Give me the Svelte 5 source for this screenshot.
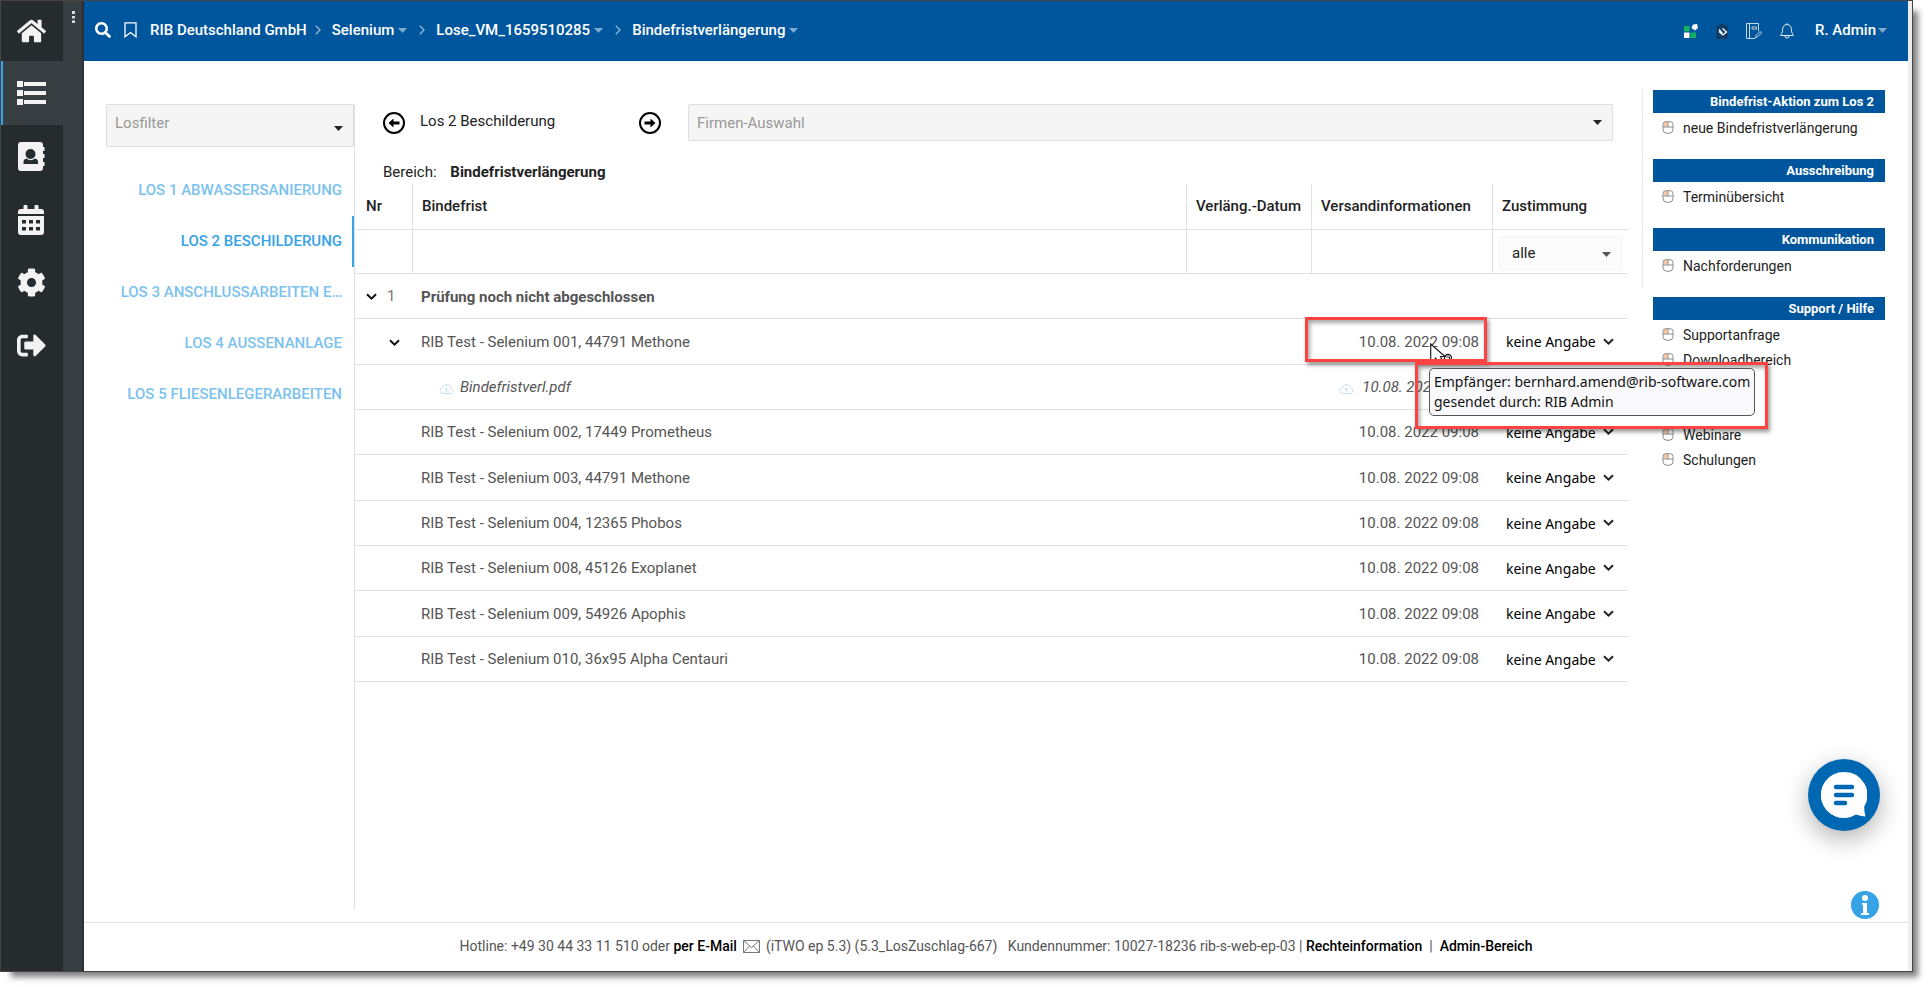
<script lang="ts">
    const crumbs = [
        { label: 'RIB Deutschland GmbH', menu: false },
        { label: 'Selenium', menu: true },
        { label: 'Lose_VM_1659510285', menu: true },
        { label: 'Bindefristverlängerung', menu: true }
    ];

    const lose = [
        'Los 1 Abwassersanierung',
        'Los 2 Beschilderung',
        'Los 3 Anschlussarbeiten E…',
        'Los 4 Aussenanlage',
        'Los 5 Fliesenlegerarbeiten'
    ];
    let activeLos = $state(1);

    const sentAt = '10.08. 2022 09:08';
    const firms = [
        { name: 'RIB Test - Selenium 001, 44791 Methone', file: 'Bindefristverl.pdf' },
        { name: 'RIB Test - Selenium 002, 17449 Prometheus' },
        { name: 'RIB Test - Selenium 003, 44791 Methone' },
        { name: 'RIB Test - Selenium 004, 12365 Phobos' },
        { name: 'RIB Test - Selenium 008, 45126 Exoplanet' },
        { name: 'RIB Test - Selenium 009, 54926 Apophis' },
        { name: 'RIB Test - Selenium 010, 36x95 Alpha Centauri' }
    ];

    const actions = [
        { title: 'Bindefrist-Aktion zum Los 2', links: ['neue Bindefristverlängerung'] },
        { title: 'Ausschreibung', links: ['Terminübersicht'] },
        { title: 'Kommunikation', links: ['Nachforderungen'] }
    ];
    const support = {
        title: 'Support / Hilfe',
        links: ['Supportanfrage', 'Downloadbereich', '', '', 'Webinare', 'Schulungen']
    };
</script>

{#snippet caret()}
    <svg class="caret" width="9" height="5" viewBox="0 0 9 5"><path d="M0 0h9L4.500 5z" fill="currentColor" /></svg>
{/snippet}

{#snippet chevron()}
    <svg class="chevron" width="11" height="8" viewBox="0 0 11 8"><path d="M1 1.200l4.500 4.500L10 1.200" fill="none" stroke="currentColor" stroke-width="2" /></svg>
{/snippet}

{#snippet cloud()}
    <svg class="cloud" width="15" height="12" viewBox="0 0 15 12" fill="none" stroke="currentColor">
        <path d="M3.500 10.500h8a2.700 2.700 0 0 0 .7-5.200A4.600 4.600 0 0 0 3.400 4.600a3 3 0 0 0 .1 5.900z" />
        <path d="M7.500 9V5M5.500 6.800l2-2 2 2" />
    </svg>
{/snippet}

{#snippet section(s)}
    <section class="box">
        <h2>{s.title}</h2>
        <ul>
            {#each s.links as link}
                <li>
                    <a href="#top">
                        <svg width="12" height="13" viewBox="0 0 12 13">
                            <path d="M1.500 5.500V3a2 2 0 0 1 2-2H5.500v4.500z" fill="#f9c79c" />
                            <path d="M1 3.500Q1 .7 3.800.7h4.400Q11 .7 11 3.500v4.800q0 4-4 4H5q-4 0-4-4zM1 6h10M6 .7V6" fill="none" stroke="#8c8c8c" />
                        </svg>
                        <span>{link}</span>
                    </a>
                </li>
            {/each}
        </ul>
    </section>
{/snippet}

<div class="window" id="top">
    <nav class="sidebar">
        <a href="#home" aria-label="Start">
            <svg width="29" height="26" viewBox="0 0 576 512"><path d="M280.370 148.260L96 300.110V464a16 16 0 0 0 16 16l112.060-.29a16 16 0 0 0 15.920-16V368a16 16 0 0 1 16-16h64a16 16 0 0 1 16 16v95.640a16 16 0 0 0 16 16.050L464 480a16 16 0 0 0 16-16V300L295.670 148.260a12.190 12.190 0 0 0-15.300 0zM571.600 251.470L488 182.560V44.050a12 12 0 0 0-12-12h-56a12 12 0 0 0-12 12v72.610L318.470 43a48 48 0 0 0-61 0L4.340 251.470a12 12 0 0 0-1.600 16.900l25.500 31A12 12 0 0 0 45.150 301l235.220-193.740a12.190 12.190 0 0 1 15.300 0L530.900 301a12 12 0 0 0 16.900-1.600l25.500-31a12 12 0 0 0-1.700-16.930z" /></svg>
        </a>
        <a href="#list" class="active" aria-label="Liste">
            <svg width="29" height="26" viewBox="0 0 29 26"><path d="M0 1h6v6H0zM7 2h22v4H7zM0 10h6v6H0zM7 11h22v4H7zM0 19h6v6H0zM7 20h22v4H7z" /></svg>
        </a>
        <a href="#contacts" aria-label="Adressbuch">
            <svg width="27" height="29" viewBox="0 0 27 29">
                <path fill-rule="evenodd" d="M3 0h19a3 3 0 0 1 3 3v2h1.500v4H25v3h1.500v4H25v4h1.500v4H25v2a3 3 0 0 1-3 3H3a3 3 0 0 1-3-3V3a3 3 0 0 1 3-3zM12.500 7a5 5 0 1 0 0 10 5 5 0 0 0 0-10zM8.500 16.500q-3 .5-3 3.500v2h14.500v-2q0-3-3-3.500-2 1.800-4.300 1.800t-4.200-1.800z" />
            </svg>
        </a>
        <a href="#calendar" aria-label="Kalender">
            <svg width="26" height="30" viewBox="0 0 26 30">
                <path d="M0 9V7a3 3 0 0 1 3-3h2.500V1a1 1 0 0 1 1-1h2a1 1 0 0 1 1 1v3h7V1a1 1 0 0 1 1-1h2a1 1 0 0 1 1 1v3H23a3 3 0 0 1 3 3v2z" />
                <path fill-rule="evenodd" d="M0 11h26v16a3 3 0 0 1-3 3H3a3 3 0 0 1-3-3zM4 15v3.500h4V15zM11 15v3.500h4V15zM18 15v3.500h4V15zM4 22v3.500h4V22zM11 22v3.500h4V22zM18 22v3.500h4V22z" />
            </svg>
        </a>
        <a href="#settings" aria-label="Einstellungen">
            <svg width="29" height="29" viewBox="0 0 512 512"><path d="M487.400 315.700l-42.600-24.600c4.300-23.200 4.300-47 0-70.200l42.600-24.600c4.900-2.800 7.100-8.600 5.500-14-11.100-35.600-30-67.800-54.700-94.600-3.800-4.100-10-5.100-14.800-2.300L380.800 110c-17.900-15.400-38.500-27.300-60.800-35.100V25.800c0-5.600-3.900-10.500-9.400-11.700-36.700-8.200-74.300-7.800-109.200 0-5.500 1.200-9.400 6.100-9.400 11.700V75c-22.200 7.900-42.800 19.800-60.800 35.100L88.700 85.500c-4.900-2.800-11-1.900-14.800 2.300-24.700 26.700-43.600 58.900-54.700 94.600-1.700 5.400.6 11.200 5.500 14L67.300 221c-4.300 23.200-4.300 47 0 70.200l-42.600 24.600c-4.900 2.800-7.100 8.600-5.500 14 11.100 35.600 30 67.800 54.700 94.600 3.800 4.100 10 5.100 14.800 2.300l42.600-24.600c17.900 15.400 38.500 27.300 60.800 35.100v49.200c0 5.600 3.900 10.500 9.400 11.700 36.700 8.200 74.300 7.800 109.200 0 5.500-1.200 9.400-6.100 9.400-11.700v-49.200c22.200-7.900 42.800-19.800 60.800-35.100l42.600 24.600c4.900 2.800 11 1.900 14.800-2.300 24.700-26.700 43.600-58.900 54.700-94.600 1.500-5.500-.7-11.300-5.600-14.100zM256 336c-44.100 0-80-35.900-80-80s35.900-80 80-80 80 35.900 80 80-35.900 80-80 80z" /></svg>
        </a>
        <a href="#logout" aria-label="Abmelden">
            <svg width="29" height="29" viewBox="0 0 512 512"><path d="M497 273L329 441c-15 15-41 4.500-41-17v-96H152c-13.300 0-24-10.700-24-24v-96c0-13.300 10.700-24 24-24h136V88c0-21.400 25.900-32 41-17l168 168c9.300 9.400 9.300 24.600 0 34zM192 436v-40c0-6.600-5.400-12-12-12H96c-17.700 0-32-14.300-32-32V160c0-17.700 14.300-32 32-32h84c6.600 0 12-5.400 12-12V76c0-6.600-5.400-12-12-12H96c-53 0-96 43-96 96v192c0 53 43 96 96 96h84c6.600 0 12-5.400 12-12z" /></svg>
        </a>
    </nav>
    <div class="strip">
        <button aria-label="Menü">
            <svg width="3" height="12" viewBox="0 0 3 12" fill="#ddd"><path d="M0 0h3v3H0zM0 5h3v2.500H0zM0 9.500h3V12H0z" /></svg>
        </button>
    </div>

    <div class="page">
        <header class="topbar">
            <button aria-label="Suche">
                <svg width="16" height="16" viewBox="0 0 512 512" fill="#fff"><path d="M505 442.700L405.300 343c-4.500-4.500-10.600-7-17-7H372c27.600-35.300 44-79.700 44-128C416 93.100 322.900 0 208 0S0 93.100 0 208s93.100 208 208 208c48.300 0 92.700-16.400 128-44v16.300c0 6.400 2.500 12.500 7 17l99.700 99.700c9.400 9.400 24.600 9.400 33.900 0l28.300-28.300c9.400-9.400 9.400-24.600.1-34zM208 336c-70.700 0-128-57.200-128-128 0-70.700 57.200-128 128-128 70.700 0 128 57.200 128 128 0 70.700-57.200 128-128 128z" /></svg>
            </button>
            <button class="bookmark" aria-label="Lesezeichen">
                <svg width="13" height="16" viewBox="0 0 13 16"><path d="M1 .8h11v14l-5.500-4.200L1 14.800z" fill="none" stroke="#fff" stroke-width="1.300" /></svg>
            </button>
            <div class="crumbs">
                {#each crumbs as c, i}
                    {#if i > 0}
                        <svg class="sep" width="6" height="10" viewBox="0 0 6 10"><path d="M.8.8L5 5 .8 9.200" fill="none" stroke="#8fb4d4" stroke-width="1.400" /></svg>
                    {/if}
                    <a href="#top">{c.label}{#if c.menu}{@render caret()}{/if}</a>
                {/each}
            </div>
            <div class="tools">
                <button aria-label="Module">
                    <svg width="14" height="15" viewBox="0 0 14 15">
                        <path d="M0 2h5.500v5.500H0zM6.500 8.500H12V14H6.500z" fill="#12b35c" />
                        <path d="M0 8.500h5.500V14H0zM9 .5l4-.5 1 4-3 2.500L7.500 4z" fill="#fff" />
                    </svg>
                </button>
                <button aria-label="Aufgaben">
                    <svg width="12" height="15" viewBox="0 0 12 15">
                        <path d="M1 2h2.500Q4 .8 6 .8T8.500 2H11v12H1z" fill="#10406d" stroke="#1c2f40" />
                        <path d="M3 5.500l3.500 4M6.500 4.500l4 3.500-3.500 3-4-3.500" stroke="#fff" stroke-width="1.300" fill="none" />
                    </svg>
                </button>
                <button aria-label="Notizen">
                    <svg width="16" height="16" viewBox="0 0 16 16" fill="none" stroke="#c3d9ea">
                        <path d="M12.500 8V.5H.5v15H9M3.500.5v15" />
                        <path d="M6 4h4.500v2H6z" fill="#0b2f50" />
                        <path d="M9.500 14.800l.6-2.400 4-4 1.400 1.500-4 4z" />
                    </svg>
                </button>
                <button aria-label="Benachrichtigungen">
                    <svg width="14" height="16" viewBox="0 0 14 16" fill="none" stroke="#e4eef6">
                        <path d="M7 1.500c-3 0-4.300 2.300-4.300 4.800 0 4-2 4.700-2 6.200h12.600c0-1.500-2-2.200-2-6.200C11.300 3.800 10 1.500 7 1.500zM7 .2v1.300M5 13q0 2 2 2t2-2" />
                    </svg>
                </button>
                <button class="user">R. Admin{@render caret()}</button>
            </div>
        </header>

        <div class="body">
            <aside class="lose">
                <div class="select losfilter">
                    <select aria-label="Losfilter"><option>Losfilter</option></select>
                    {@render caret()}
                </div>
                <ul>
                    {#each lose as los, i}
                        <li class:active={i === activeLos}>
                            <button onclick={() => (activeLos = i)}>{los}</button>
                        </li>
                    {/each}
                </ul>
            </aside>

            <main>
                <div class="toolbar">
                    <div class="pager">
                        <button aria-label="Vorheriges Los">
                            <svg width="22" height="22" viewBox="0 0 22 22"><circle cx="11" cy="11" r="10" fill="none" stroke="#000" stroke-width="2" /><path d="M5.500 11l5-4.500v3H16.500v3h-6v3z" /></svg>
                        </button>
                        <span>Los 2 Beschilderung</span>
                        <button aria-label="Nächstes Los">
                            <svg width="22" height="22" viewBox="0 0 22 22"><circle cx="11" cy="11" r="10" fill="none" stroke="#000" stroke-width="2" /><path d="M16.500 11l-5-4.500v3H5.500v3h6v3z" /></svg>
                        </button>
                    </div>
                    <div class="select firma">
                        <select aria-label="Firmen-Auswahl"><option>Firmen-Auswahl</option></select>
                        {@render caret()}
                    </div>
                </div>
                <p class="bereich">Bereich: <b>Bindefristverlängerung</b></p>

                <table>
                    <colgroup>
                        <col class="c-nr" /><col /><col class="c-datum" /><col class="c-versand" /><col class="c-zust" />
                    </colgroup>
                    <thead>
                        <tr>
                            <th class="nr">Nr</th>
                            <th>Bindefrist</th>
                            <th>Verläng.-Datum</th>
                            <th>Versandinformationen</th>
                            <th>Zustimmung</th>
                        </tr>
                        <tr class="filter">
                            <td></td>
                            <td></td>
                            <td></td>
                            <td></td>
                            <td>
                                <div class="select alle">
                                    <select aria-label="Zustimmung filtern"><option>alle</option></select>
                                    {@render caret()}
                                </div>
                            </td>
                        </tr>
                    </thead>
                    <tbody>
                        <tr>
                            <td class="toggle"><button aria-label="Gruppe einklappen">{@render chevron()}</button><span>1</span></td>
                            <td class="group" colspan="4">Prüfung noch nicht abgeschlossen</td>
                        </tr>
                        {#each firms as firm, i}
                            <tr>
                                <td class="toggle sub">
                                    {#if firm.file}<button aria-label="Dateien einklappen">{@render chevron()}</button>{/if}
                                </td>
                                <td>{firm.name}</td>
                                <td></td>
                                <td class="date">
                                    {sentAt}
                                    {#if i === 0}
                                        <div class="mark mark-date">
                                            <svg width="26" height="18" viewBox="0 0 26 18">
                                                <path d="M.7 1v17h3l2-3 1.800 3h5l-2-4.500h4.500z" fill="#fff" stroke="#222" stroke-width="1.200" />
                                                <circle cx="18" cy="15" r="3.500" fill="none" stroke="#222" stroke-width="1.300" />
                                                <path d="M16.500 14h3v3M16.500 18v-2" fill="none" stroke="#222" />
                                            </svg>
                                        </div>
                                        <div class="mark mark-tip">
                                            <div class="tip" role="tooltip">Empfänger: bernhard.amend@rib-software.com<br />gesendet durch: RIB Admin</div>
                                        </div>
                                    {/if}
                                </td>
                                <td>
                                    <div class="select angabe">
                                        <select aria-label="Zustimmung"><option>keine Angabe</option></select>
                                        {@render chevron()}
                                    </div>
                                </td>
                            </tr>
                            {#if firm.file}
                                <tr class="file">
                                    <td></td>
                                    <td class="name">{@render cloud()}{firm.file}</td>
                                    <td></td>
                                    <td class="date">{@render cloud()}{sentAt}</td>
                                    <td></td>
                                </tr>
                            {/if}
                        {/each}
                    </tbody>
                </table>
            </main>

            <aside class="actions">
                <div class="lined">
                    {#each actions as s}
                        {@render section(s)}
                    {/each}
                </div>
                {@render section(support)}
            </aside>
        </div>

        <footer>
            <span>Hotline: +49 30 44 33 11 510 oder <a href="#mail">per E-Mail</a></span>
            <svg width="17" height="13" viewBox="0 0 17 13" fill="none" stroke="#777"><path d="M.5.5h16v12H.5zM.5.5l8 7 8-7M.5 12.500l6-6.500M16.500 12.500l-6-6.500" /></svg>
            <span>(iTWO ep 5.3) (5.3_LosZuschlag-667) &nbsp; Kundennummer: 10027-18236 rib-s-web-ep-03 | <a href="#rechte">Rechteinformation</a> &nbsp;|&nbsp; <a href="#admin">Admin-Bereich</a></span>
        </footer>
    </div>
    <div class="scroll"></div>

    <button class="chat" aria-label="Chat">
        <svg width="46" height="46" viewBox="0 0 46 46">
            <path d="M23 0a23 23 0 1 0 12 42.500q4 1.500 9.500 2-1.500-5-1.200-10A23 23 0 0 0 23 0z" fill="#fff" />
            <path d="M15 15h16M15 23h16M15 31h9" stroke="#0067b3" stroke-width="4.500" stroke-linecap="round" />
        </svg>
    </button>
    <button class="info" aria-label="Info">
        <svg width="28" height="28" viewBox="0 0 28 28">
            <circle cx="14" cy="14" r="14" fill="#36a3e6" />
            <path d="M14 4a3 3 0 1 1 0 6 3 3 0 0 1 0-6zM11 12h5v10h2v2h-8v-2h2v-8h-1z" fill="#fff" />
        </svg>
    </button>
</div>

<style>
    :global(body) { background: #fff; }

    * { box-sizing: border-box; }

    .window {
        position: relative;
        display: flex;
        min-height: calc(100vh - 15px);
        margin: 0 15px 15px 0;
        border: 1px solid #444;
        background: #fff;
        box-shadow: 8px 8px 6px -3px rgba(0, 0, 0, 0.5);
        font-family: Roboto, sans-serif;
        font-size: 15px;
        color: #555;
    }

    a { color: inherit; text-decoration: none; }
    svg { display: block; flex: none; }
    ul { list-style: none; margin: 0; padding: 0; }

    button {
        padding: 0;
        border: none;
        background: none;
        color: inherit;
        font: inherit;
        cursor: pointer;
    }

    .sidebar { width: 62px; background: #262b2d; }

    .sidebar a {
        display: flex;
        align-items: center;
        justify-content: center;
        height: 63px;
        padding-right: 2px;
    }

    .sidebar a:first-child { height: 60px; }

    .sidebar a.active {
        height: 64px;
        background: #373f42;
        border-left: 2px solid #36a3e6;
        padding-right: 4px;
    }

    .sidebar svg { fill: #f2f2f2; }

    .strip {
        width: 21px;
        padding: 10px 0 0 9px;
        background: #373f42;
        border-right: 2px solid #2a3033;
    }

    .strip button { display: block; }

    .page {
        flex: 1;
        min-width: 0;
        display: flex;
        flex-direction: column;
    }

    .scroll { width: 4px; background: #ededee; }

    .topbar {
        display: flex;
        align-items: center;
        height: 60px;
        padding: 0 21px 2px 11px;
        background: #00569d;
        color: #fff;
        font-weight: 500;
    }

    .bookmark { margin: 0 13px; }
    .topbar .caret { color: #7fabd0; margin: 0 4px; }
    .crumbs, .crumbs a, .tools, .user { display: flex; align-items: center; }
    .sep { margin: 0 11px 0 8px; }
    .tools { margin-left: auto; gap: 18px; }
    .tools svg { margin-top: 2px; }
    .tools .user { margin-left: 3px; }
    .topbar .user .caret { margin: 0 0 0 2px; }

    .body { flex: 1; display: flex; padding-bottom: 12px; }

    .lose {
        width: 249px;
        margin: 43px 0 0 22px;
        border-right: 1px solid #e0e0e0;
    }

    .select { position: relative; }

    .select select {
        appearance: none;
        width: 100%;
        height: 100%;
        border: 1px solid #ddd;
        border-radius: 2px;
        background: #f5f5f5;
        color: #999;
        font: inherit;
    }

    .select .caret, .select .chevron {
        position: absolute;
        right: 11px;
        top: 16px;
        color: #222;
        pointer-events: none;
    }

    .losfilter { height: 43px; }
    .losfilter select { padding: 0 8px 6px; }
    .losfilter .caret { top: 22px; }

    .lose ul { padding-top: 18px; }
    .lose li { height: 51px; text-align: right; }

    .lose li button {
        height: 51px;
        padding: 0 12px 2px 0;
        white-space: nowrap;
        text-transform: uppercase;
        font-weight: 500;
        color: #7cc2ee;
    }

    .lose li.active { border-right: 2px solid #36a3e6; }
    .lose li.active button { color: #36a3e6; padding-right: 10px; }

    main { flex: 1; min-width: 0; padding-top: 43px; }

    .toolbar {
        display: flex;
        align-items: center;
        gap: 27px;
        padding: 0 15px 0 28px;
        height: 37px;
    }

    .pager { display: flex; align-items: center; width: 278px; color: #222; }
    .pager span { flex: 1; padding: 0 0 4px 15px; }
    .firma { flex: 1; height: 37px; }
    .firma select { padding: 0 8px; }

    .bereich {
        margin: 19px 0 0;
        padding-left: 28px;
        line-height: 24px;
        color: #222;
    }

    .bereich b { margin-left: 10px; }

    table {
        width: 100%;
        table-layout: fixed;
        border-collapse: separate;
        border-spacing: 0;
    }

    .c-nr { width: 58px; }
    .c-datum { width: 125px; }
    .c-versand { width: 181px; }
    .c-zust { width: 135px; }

    th, td {
        height: 45px;
        padding: 0 9px;
        border-bottom: 1px solid #e0e0e0;
        text-align: left;
        white-space: nowrap;
    }

    th {
        height: 46px;
        padding-bottom: 2px;
        color: #222;
        font-weight: 500;
    }

    th.nr { padding-left: 11px; }
    td { padding: 0 8px; }
    .filter td { height: 44px; padding: 3px 6px 0; }
    thead tr > :not(:last-child) { border-right: 1px solid #e0e0e0; }
    tbody tr:nth-child(3n + 2) td { height: 46px; }

    .toggle { padding-left: 11px; color: #777; }
    .toggle.sub { padding-left: 34px; }
    .toggle button { vertical-align: middle; color: #111; }
    .toggle span { margin-left: 10px; }
    .group { padding-top: 2px; font-weight: 700; }
    .date { position: relative; padding-right: 14px; text-align: right; }
    .file { font-style: italic; }
    .cloud { display: inline-block; vertical-align: -3px; margin-right: 6px; color: #c9dff0; }
    .date .cloud { margin-right: 8px; }
    .name { padding-left: 26px; }

    .alle { height: 35px; }
    .alle select { padding: 0 12px; background: #fcfcfc; border-color: #f5f5f5; color: #222; }
    .alle .caret { color: #555; }

    .angabe { height: 30px; padding-left: 5px; font-family: "Noto Sans", sans-serif; font-size: 14px; }
    .angabe select { border: none; background: none; color: #000; }
    .angabe .chevron { right: 6px; top: 11px; }

    .mark {
        position: absolute;
        border: 3px solid #ff4343;
        box-shadow: 2px 3px 4px rgba(0, 0, 0, 0.4), inset 2px 3px 4px rgba(0, 0, 0, 0.35);
        text-align: left;
    }

    .mark-date {
        inset: -2px 6px 2px -7px;
        padding: 23px 0 0 122px;
        overflow: hidden;
    }

    .mark-tip { left: 103px; top: 43px; z-index: 2; padding: 3px 10px 10px 11px; }

    .tip {
        padding: 3px 4px;
        border: 1px solid #555;
        border-radius: 5px;
        background: #f9f9fb;
        color: #111;
        font-family: "Noto Sans", sans-serif;
        font-size: 14px;
        line-height: 20px;
    }

    .actions {
        width: 266px;
        margin: 29px 0 0 14px;
        font-size: 14px;
        color: #222;
    }

    .lined {
        display: flex;
        flex-direction: column;
        gap: 9px;
        margin-bottom: 9px;
        border-left: 1px solid #e8e8e8;
    }

    .box { padding: 0 23px 10px 10px; }
    .actions > .box { padding-left: 11px; }

    h2 {
        margin: 0;
        padding-right: 11px;
        background: #00569d;
        color: #fff;
        font-size: 13px;
        line-height: 23px;
        text-align: right;
    }

    .box ul { padding-top: 2px; }
    .box a { display: flex; align-items: center; gap: 9px; height: 25px; padding-left: 9px; }

    footer {
        display: flex;
        align-items: center;
        justify-content: center;
        gap: 6px;
        height: 49px;
        padding-bottom: 2px;
        border-top: 1px solid #e0e0e0;
        font-size: 14px;
    }

    footer a { color: #000; font-weight: 500; }

    .chat {
        position: absolute;
        right: 32px;
        bottom: 140px;
        display: flex;
        align-items: center;
        justify-content: center;
        width: 72px;
        height: 72px;
        border-radius: 50%;
        background: #0067b3;
        box-shadow: 0 8px 24px rgba(0, 0, 0, 0.3);
    }

    .info { position: absolute; right: 33px; bottom: 52px; }
</style>
